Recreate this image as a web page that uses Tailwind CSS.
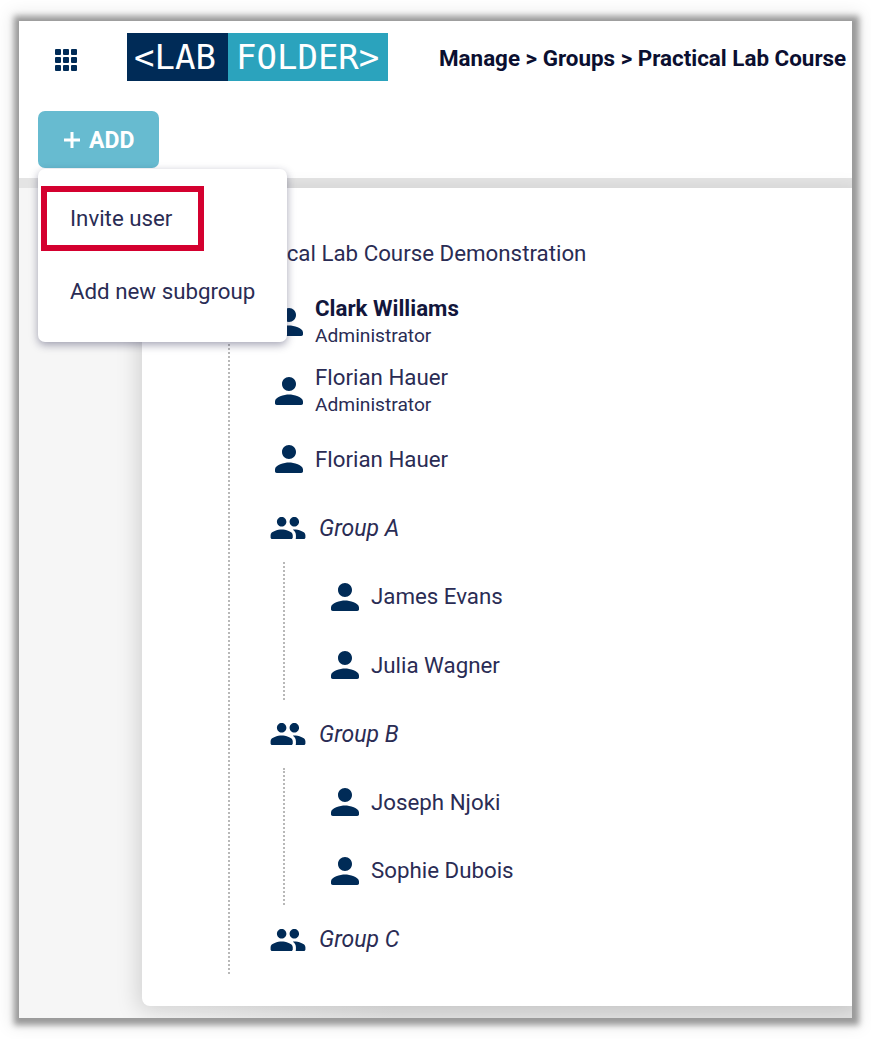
<!DOCTYPE html>
<html lang="en">
<head>
<meta charset="utf-8">
<title>Labfolder groups</title>
<script src="https://cdn.jsdelivr.net/npm/@tailwindcss/browser@4"></script>
</head>
<body class="bg-white font-['Roboto',sans-serif] text-[#2a2c54]">
<div class="relative ml-[19px] mt-[21px] flex h-[997px] w-[833px] flex-col overflow-hidden bg-[#f6f6f6]">
  <!-- header -->
  <header class="h-[157px] shrink-0 bg-white">
    <div class="flex items-start">
      <svg class="ml-[36px] mt-[28px] h-[22px] w-[22px] shrink-0 text-[#002b57]" viewBox="0 0 22 22" fill="currentColor">
        <rect x="0" y="0" width="6" height="6" rx="1"/><rect x="8" y="0" width="6" height="6" rx="1"/><rect x="16" y="0" width="6" height="6" rx="1"/>
        <rect x="0" y="8" width="6" height="6" rx="1"/><rect x="8" y="8" width="6" height="6" rx="1"/><rect x="16" y="8" width="6" height="6" rx="1"/>
        <rect x="0" y="16" width="6" height="6" rx="1"/><rect x="8" y="16" width="6" height="6" rx="1"/><rect x="16" y="16" width="6" height="6" rx="1"/>
      </svg>
      <div class="ml-[50px] mt-[12px] flex h-[48px] w-[261px] shrink-0 overflow-hidden font-['DejaVu_Sans_Mono',monospace] text-[34px] leading-[49px] text-white">
        <div class="w-[101px] shrink-0 bg-[#002b57] pl-[7px]">&lt;LAB</div>
        <div class="w-[160px] shrink-0 bg-[#2ba3bd] pl-[8px]">FOLDER&gt;</div>
      </div>
      <div class="ml-[51px] mt-[23px] whitespace-nowrap text-[22.4px] font-bold leading-[28px] text-[#0b0f30]">Manage &gt; Groups &gt; Practical Lab Course</div>
    </div>
    <button class="ml-[19px] mt-[30px] flex h-[57px] w-[121px] items-center rounded-[7px] bg-[#67bbd0] pl-[26px] text-[23px] font-bold text-white">
      <svg class="h-[16px] w-[16px]" viewBox="0 0 16 16" fill="currentColor"><path d="M6.5 0h3v6.5H16v3H9.5V16h-3V9.5H0v-3h6.5z"/></svg>
      <span class="ml-[9px] pt-[3px]">ADD</span>
    </button>
  </header>
  <div class="h-[10px] shrink-0 bg-[#e4e4e4]"></div>

  <!-- tree card -->
  <section class="relative ml-[123px] h-[818px] w-[720px] rounded-bl-[8px] bg-white pl-[87px] text-[22.3px] shadow-[-4px_5px_22px_rgba(0,0,0,0.15)]">
    <h2 class="flex h-[100px] items-end pb-[21px] leading-[28px]">Practical Lab Course Demonstration</h2>
    <ul class="-ml-px border-l-2 border-dotted border-[#b8b8b8]">
      <li class="flex h-[68.6px] items-center pl-[38px]">
        <svg class="h-[42px] w-[42px] text-[#002b57]" viewBox="0 0 24 24" fill="currentColor"><path d="M12 12c2.21 0 4-1.79 4-4s-1.79-4-4-4-4 1.79-4 4 1.79 4 4 4zm0 2c-2.67 0-8 1.34-8 4v1c0 .55.45 1 1 1h14c.55 0 1-.45 1-1v-1c0-2.66-5.33-4-8-4z"/></svg>
        <div class="ml-[5px] leading-[28px]"><div class="font-bold text-[#12163c]">Clark Williams</div><div class="text-[19.2px]">Administrator</div></div>
      </li>
      <li class="flex h-[68.6px] items-center pl-[38px]">
        <svg class="h-[42px] w-[42px] text-[#002b57]" viewBox="0 0 24 24" fill="currentColor"><path d="M12 12c2.21 0 4-1.79 4-4s-1.79-4-4-4-4 1.79-4 4 1.79 4 4 4zm0 2c-2.67 0-8 1.34-8 4v1c0 .55.45 1 1 1h14c.55 0 1-.45 1-1v-1c0-2.66-5.33-4-8-4z"/></svg>
        <div class="ml-[5px] leading-[28px]"><div>Florian Hauer</div><div class="text-[19.2px]">Administrator</div></div>
      </li>
      <li class="flex h-[68.6px] items-center pl-[38px]">
        <svg class="h-[42px] w-[42px] text-[#002b57]" viewBox="0 0 24 24" fill="currentColor"><path d="M12 12c2.21 0 4-1.79 4-4s-1.79-4-4-4-4 1.79-4 4 1.79 4 4 4zm0 2c-2.67 0-8 1.34-8 4v1c0 .55.45 1 1 1h14c.55 0 1-.45 1-1v-1c0-2.66-5.33-4-8-4z"/></svg>
        <div class="ml-[5px]">Florian Hauer</div>
      </li>
      <li>
        <div class="flex h-[68.6px] items-center pl-[39px]">
          <svg class="h-[38px] w-[38px] text-[#002b57]" viewBox="0 0 24 24" fill="currentColor"><path d="M16 11c1.66 0 2.99-1.34 2.99-3S17.66 5 16 5s-3 1.34-3 3 1.34 3 3 3zm-8 0c1.66 0 2.99-1.34 2.99-3S9.66 5 8 5 5 6.34 5 8s1.34 3 3 3zm0 2c-2.33 0-7 1.17-7 3.5V18c0 .55.45 1 1 1h12c.55 0 1-.45 1-1v-1.5c0-2.33-4.67-3.5-7-3.5zm8 0c-.29 0-.62.02-.97.05.02.01.03.03.04.04 1.14.83 1.93 1.94 1.93 3.41V18c0 .35-.07.69-.18 1H22c.55 0 1-.45 1-1v-1.5c0-2.33-4.67-3.5-7-3.5z"/></svg>
          <span class="ml-[12px] pt-[2px] text-[23px] italic">Group A</span>
        </div>
        <ul class="ml-[53px] border-l-2 border-dotted border-[#b8b8b8]">
          <li class="flex h-[68.6px] items-center pl-[39px]">
            <svg class="h-[42px] w-[42px] text-[#002b57]" viewBox="0 0 24 24" fill="currentColor"><path d="M12 12c2.21 0 4-1.79 4-4s-1.79-4-4-4-4 1.79-4 4 1.79 4 4 4zm0 2c-2.67 0-8 1.34-8 4v1c0 .55.45 1 1 1h14c.55 0 1-.45 1-1v-1c0-2.66-5.33-4-8-4z"/></svg>
            <span class="ml-[5px]">James Evans</span>
          </li>
          <li class="flex h-[68.6px] items-center pl-[39px]">
            <svg class="h-[42px] w-[42px] text-[#002b57]" viewBox="0 0 24 24" fill="currentColor"><path d="M12 12c2.21 0 4-1.79 4-4s-1.79-4-4-4-4 1.79-4 4 1.79 4 4 4zm0 2c-2.67 0-8 1.34-8 4v1c0 .55.45 1 1 1h14c.55 0 1-.45 1-1v-1c0-2.66-5.33-4-8-4z"/></svg>
            <span class="ml-[5px]">Julia Wagner</span>
          </li>
        </ul>
      </li>
      <li>
        <div class="flex h-[68.6px] items-center pl-[39px]">
          <svg class="h-[38px] w-[38px] text-[#002b57]" viewBox="0 0 24 24" fill="currentColor"><path d="M16 11c1.66 0 2.99-1.34 2.99-3S17.66 5 16 5s-3 1.34-3 3 1.34 3 3 3zm-8 0c1.66 0 2.99-1.34 2.99-3S9.66 5 8 5 5 6.34 5 8s1.34 3 3 3zm0 2c-2.33 0-7 1.17-7 3.5V18c0 .55.45 1 1 1h12c.55 0 1-.45 1-1v-1.5c0-2.33-4.67-3.5-7-3.5zm8 0c-.29 0-.62.02-.97.05.02.01.03.03.04.04 1.14.83 1.93 1.94 1.93 3.41V18c0 .35-.07.69-.18 1H22c.55 0 1-.45 1-1v-1.5c0-2.33-4.67-3.5-7-3.5z"/></svg>
          <span class="ml-[12px] pt-[2px] text-[23px] italic">Group B</span>
        </div>
        <ul class="ml-[53px] border-l-2 border-dotted border-[#b8b8b8]">
          <li class="flex h-[68.6px] items-center pl-[39px]">
            <svg class="h-[42px] w-[42px] text-[#002b57]" viewBox="0 0 24 24" fill="currentColor"><path d="M12 12c2.21 0 4-1.79 4-4s-1.79-4-4-4-4 1.79-4 4 1.79 4 4 4zm0 2c-2.67 0-8 1.34-8 4v1c0 .55.45 1 1 1h14c.55 0 1-.45 1-1v-1c0-2.66-5.33-4-8-4z"/></svg>
            <span class="ml-[5px]">Joseph Njoki</span>
          </li>
          <li class="flex h-[68.6px] items-center pl-[39px]">
            <svg class="h-[42px] w-[42px] text-[#002b57]" viewBox="0 0 24 24" fill="currentColor"><path d="M12 12c2.21 0 4-1.79 4-4s-1.79-4-4-4-4 1.79-4 4 1.79 4 4 4zm0 2c-2.67 0-8 1.34-8 4v1c0 .55.45 1 1 1h14c.55 0 1-.45 1-1v-1c0-2.66-5.33-4-8-4z"/></svg>
            <span class="ml-[5px]">Sophie Dubois</span>
          </li>
        </ul>
      </li>
      <li class="flex h-[68.6px] items-center pl-[39px]">
        <svg class="h-[38px] w-[38px] text-[#002b57]" viewBox="0 0 24 24" fill="currentColor"><path d="M16 11c1.66 0 2.99-1.34 2.99-3S17.66 5 16 5s-3 1.34-3 3 1.34 3 3 3zm-8 0c1.66 0 2.99-1.34 2.99-3S9.66 5 8 5 5 6.34 5 8s1.34 3 3 3zm0 2c-2.33 0-7 1.17-7 3.5V18c0 .55.45 1 1 1h12c.55 0 1-.45 1-1v-1.5c0-2.33-4.67-3.5-7-3.5zm8 0c-.29 0-.62.02-.97.05.02.01.03.03.04.04 1.14.83 1.93 1.94 1.93 3.41V18c0 .35-.07.69-.18 1H22c.55 0 1-.45 1-1v-1.5c0-2.33-4.67-3.5-7-3.5z"/></svg>
        <span class="ml-[12px] pt-[2px] text-[23px] italic">Group C</span>
      </li>
    </ul>
  </section>
  <div class="flex-1 bg-linear-to-r from-[#f6f6f6] from-[16%] to-[#e4e4e4] to-[45%]"></div>

  <!-- add menu -->
  <div class="absolute left-[19px] top-[148px] h-[173px] w-[249px] rounded-[7px] bg-white text-[22.3px] shadow-[0_3px_8px_rgba(30,30,70,0.4)]">
    <div class="pl-[32px] pt-[35px] leading-[28px]">Invite user</div>
    <div class="pl-[32px] pt-[45px] leading-[28px]">Add new subgroup</div>
    <div class="absolute left-[3px] top-[17px] h-[65px] w-[163px] border-[6px] border-[#d4002f]"></div>
  </div>
</div>
<!-- frame shadow -->
<div class="pointer-events-none absolute left-[19px] top-[21px] h-[997px] w-[833px] shadow-[1px_1px_6px_6px_#9a9a9a,0_0_16px_9px_rgba(0,0,0,0.08)]"></div>
</body>
</html>
